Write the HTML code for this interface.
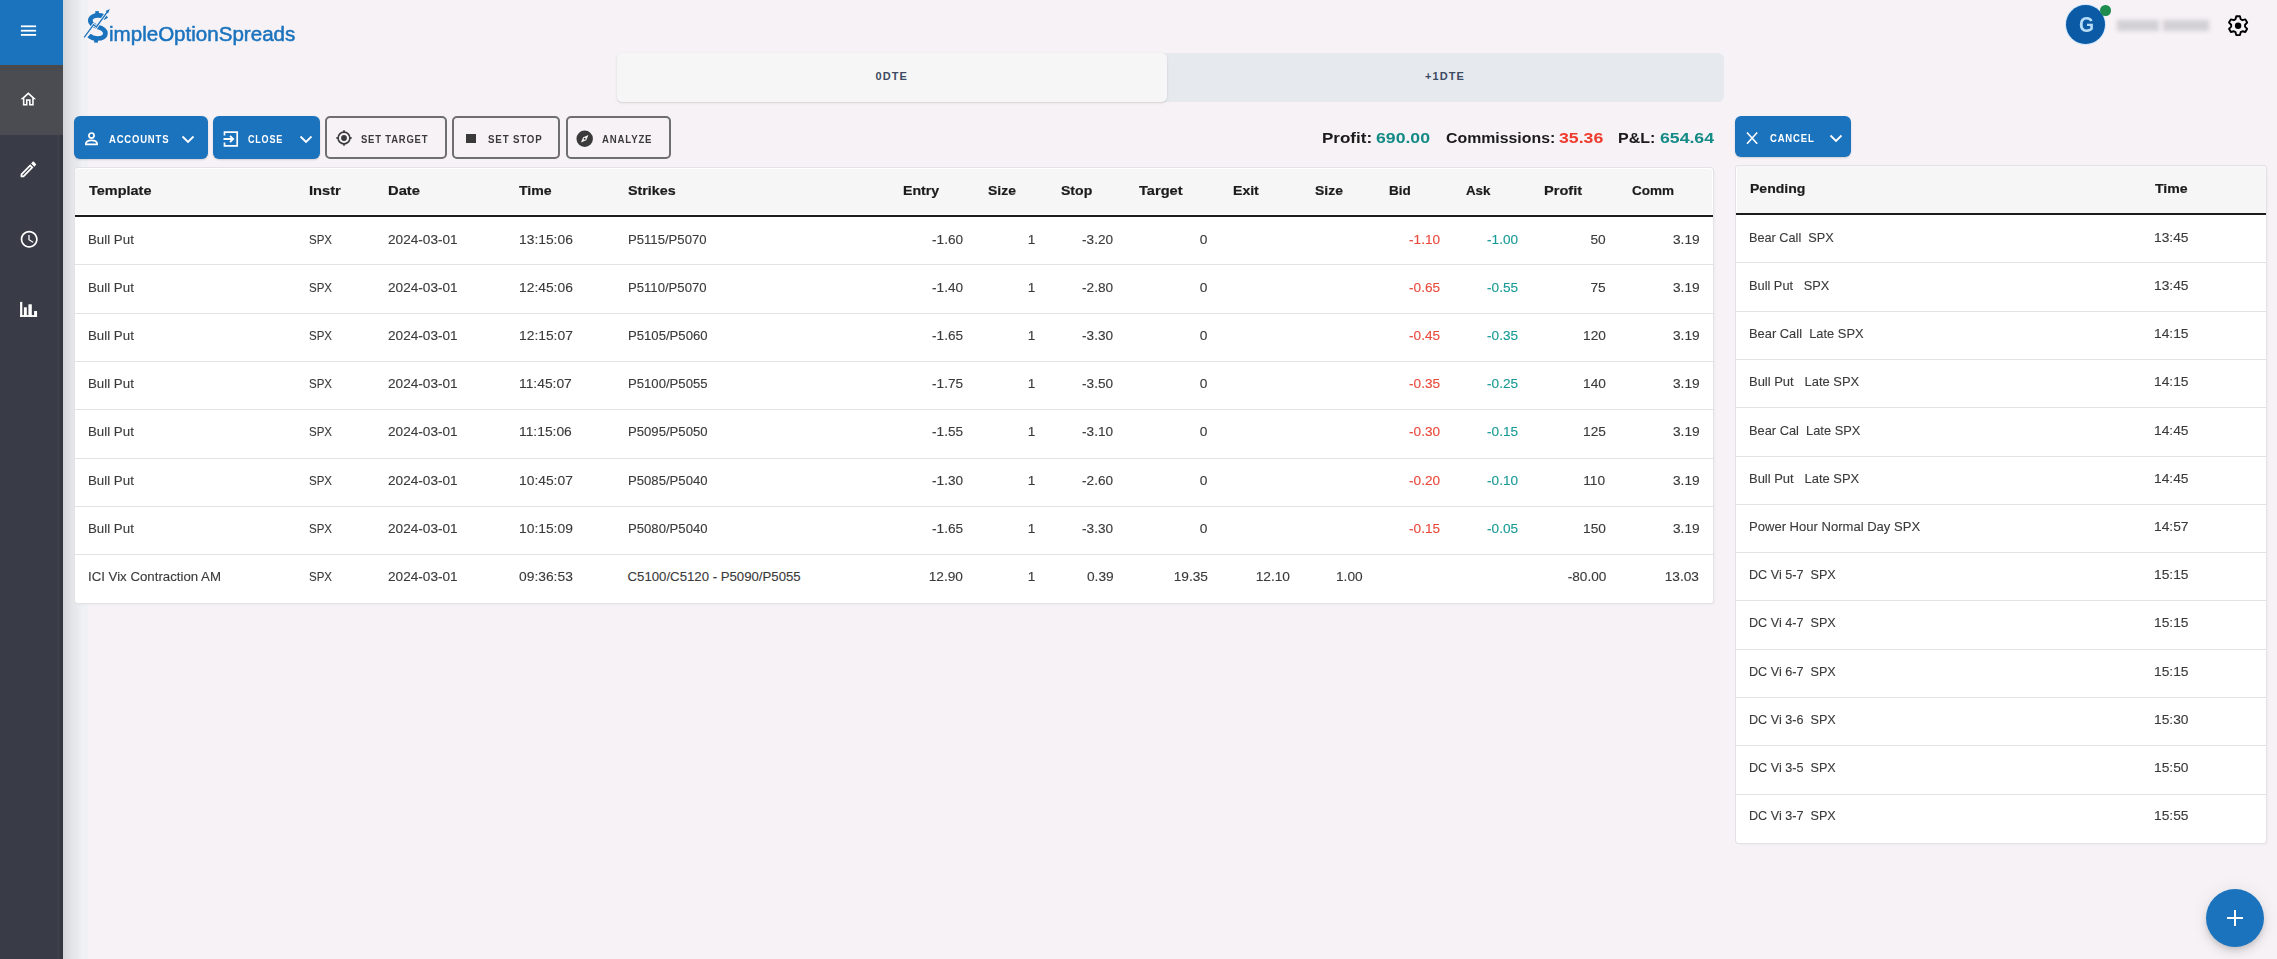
<!DOCTYPE html>
<html><head><meta charset="utf-8"><title>SimpleOptionSpreads</title>
<style>
html,body{margin:0;padding:0;}
body{width:2277px;height:959px;background:#f6f2f5;position:relative;overflow:hidden;font-family:"Liberation Sans",sans-serif;}
.t{position:absolute;white-space:pre;}
</style></head><body>
<div style="position:absolute;left:0px;top:0px;width:63px;height:959px;background:#393c46;z-index:2"></div>
<div style="position:absolute;left:57px;top:0px;width:3px;height:959px;background:#3c3f48;z-index:2"></div>
<div style="position:absolute;left:60px;top:0px;width:3px;height:959px;background:#343741;z-index:2"></div>
<div style="position:absolute;left:63px;top:0px;width:25px;height:959px;background:linear-gradient(to right,#d3d5d8 0px,#dcdde0 5px,#e5e5e9 9px,#e9eaee 15px,#eff1f5 19px,#f0f1f5 24px,#f3f2f5 25px)"></div>
<div style="position:absolute;left:0px;top:0px;width:63px;height:65px;background:#1b73be;z-index:3"></div>
<div style="position:absolute;left:0px;top:65px;width:63px;height:6px;background:linear-gradient(to bottom,#4e4949 0,#4e4949 1.8px,#3f4a58 1.8px,#3f4a58 3px,#4e4949 3px,#4e4949 4.8px,#414c58 4.8px,#414c58 6px);z-index:3"></div>
<div style="position:absolute;left:0px;top:71px;width:63px;height:64px;background:#4a4c51;z-index:3"></div>
<svg style="position:absolute;left:0;top:0;z-index:4" width="63" height="65" viewBox="0 0 63 65"><g fill="#fff"><rect x="20.9" y="25.4" width="15.2" height="1.8"/><rect x="20.9" y="29.8" width="15.2" height="1.8"/><rect x="20.9" y="34.0" width="15.2" height="1.8"/></g></svg>
<svg style="position:absolute;left:19.3px;top:90.1px;z-index:4" width="18.6" height="18.6" viewBox="0 0 24 24"><path fill="#fff" d="M12 5.69l5 4.5V18h-2v-6H9v6H7v-7.81l5-4.5M12 3L2 12h3v8h6v-6h2v6h6v-8h3L12 3z"/></svg>
<svg style="position:absolute;left:18.3px;top:158.5px;z-index:4" width="20.8" height="20.8" viewBox="0 0 24 24"><path fill="#fff" d="M14.06 9.02l.92.92L5.92 19H5v-.92l9.06-9.06M17.66 3c-.25 0-.51.1-.7.29l-1.83 1.83 3.75 3.75 1.83-1.83c.39-.39.39-1.02 0-1.41l-2.34-2.34c-.2-.2-.45-.29-.71-.29zm-3.6 3.19L3 17.25V21h3.75L17.81 9.94l-3.75-3.75z"/></svg>
<svg style="position:absolute;left:18.6px;top:229.0px;z-index:4" width="20.4" height="20.4" viewBox="0 0 24 24"><path fill="#fff" d="M11.99 2C6.47 2 2 6.48 2 12s4.47 10 9.99 10C17.52 22 22 17.52 22 12S17.52 2 11.99 2zM12 20c-4.42 0-8-3.58-8-8s3.58-8 8-8 8 3.58 8 8-3.58 8-8 8zm.5-13H11v6l5.25 3.15.75-1.23-4.5-2.67z"/></svg>
<svg style="position:absolute;left:0;top:290px;z-index:4" width="63" height="40" viewBox="0 290 63 40"><g fill="#fff"><rect x="20.1" y="301.9" width="2.2" height="15"/><rect x="23.9" y="307.3" width="2.9" height="9.6"/><rect x="28.4" y="304.3" width="3.4" height="12.6"/><rect x="34.1" y="311" width="2.95" height="5.9"/><rect x="20.1" y="315.1" width="16.95" height="1.8"/></g></svg>
<svg style="position:absolute;left:82px;top:6px" width="32" height="40" viewBox="0 0 32 40">
<path d="M24 12.8 C22.5 10.2 19 9.3 16 9.4 C11.5 9.5 8.3 11.8 8.3 14.8 C8.3 18.2 12 19.8 16 21 C20.5 22.3 23.4 24 23.4 27.3 C23.4 30.8 19.8 32.5 15.5 32.5 C11.8 32.5 9 31.5 7 29.5" fill="none" stroke="#1b73be" stroke-width="4.7"/>
<rect x="13.3" y="5.1" width="3.6" height="3.6" fill="#1b73be"/>
<rect x="12.2" y="32.5" width="3.8" height="4.1" fill="#1b73be"/>
<path d="M2.2 31.4 L11.6 18.7 L14.4 21 L25.5 5.6" fill="none" stroke="#f6f2f5" stroke-width="3.0"/>
<path d="M2.2 31.4 L11.6 18.7 L14.4 21 L25.5 5.6" fill="none" stroke="#1b73be" stroke-width="1.3"/>
<path d="M27.8 3.0 L23.6 5.0 L26.0 7.4 Z" fill="#1b73be"/>
</svg>
<div class="t" style="left:108.50px;top:23.77px;font-size:20px;line-height:20px;font-weight:normal;color:#1b73be;transform:scaleX(1.0280);transform-origin:left 0;-webkit-text-stroke:0.5px #1b73be;">impleOptionSpreads</div>
<div style="position:absolute;left:2066px;top:5px;width:39px;height:39px;background:#0b5aa6;border-radius:50%;box-shadow:0 0 0 1px #cfe6fb"></div>
<div class="t" style="left:2078.60px;top:14.05px;font-size:22.5px;line-height:22.5px;font-weight:bold;color:#b7dcf6;transform:scaleX(0.8600);transform-origin:left 0;">G</div>
<div style="position:absolute;left:2100px;top:5px;width:10.5px;height:10.5px;background:#1f8c4f;border-radius:50%"></div>
<div style="position:absolute;left:2117px;top:19.5px;width:42px;height:11px;background:#d2d0d4;filter:blur(2px)"></div>
<div style="position:absolute;left:2163px;top:19.5px;width:46px;height:11px;background:#d2d0d4;filter:blur(2px)"></div>
<svg style="position:absolute;left:2222px;top:10px" width="32" height="32" viewBox="2222 10 32 32"><path fill="none" stroke="#000" stroke-width="1.9" stroke-linejoin="round" d="M2235.48 19.21 L2236.27 16.28 L2239.93 16.28 L2240.72 19.21 L2242.41 20.18 L2245.35 19.40 L2247.18 22.57 L2245.03 24.73 L2245.03 26.67 L2247.18 28.83 L2245.35 32.00 L2242.41 31.22 L2240.72 32.19 L2239.93 35.12 L2236.27 35.12 L2235.48 32.19 L2233.79 31.22 L2230.85 32.00 L2229.02 28.83 L2231.17 26.67 L2231.17 24.73 L2229.02 22.57 L2230.85 19.40 L2233.79 20.18Z"/><circle cx="2238.1" cy="25.7" r="3.2" fill="#000"/></svg>
<div style="position:absolute;left:617px;top:53px;width:1107px;height:49px;background:#e6e9ee;border-radius:6px"></div>
<div style="position:absolute;left:617px;top:53px;width:550px;height:49px;background:#f6f6f6;border-radius:5px;box-shadow:0 1px 3px rgba(0,0,0,0.10), 0 1px 1px rgba(0,0,0,0.05)"></div>
<div class="t" style="left:875.50px;top:71.49px;font-size:11px;line-height:11px;font-weight:bold;color:#3c4a63;letter-spacing:1.1px;">0DTE</div>
<div class="t" style="left:1425.00px;top:71.49px;font-size:11px;line-height:11px;font-weight:bold;color:#3c4a63;letter-spacing:1.1px;">+1DTE</div>
<div style="position:absolute;left:73.5px;top:116.3px;width:134.2px;height:43px;background:#1b73be;border-radius:6px;box-shadow:0 1px 2px rgba(0,0,0,0.15)"></div>
<div style="position:absolute;left:213px;top:116.3px;width:107px;height:43px;background:#1b73be;border-radius:6px;box-shadow:0 1px 2px rgba(0,0,0,0.15)"></div>
<div style="position:absolute;left:325px;top:116px;width:122px;height:43px;border:2px solid #6f6f6f;border-radius:5px;box-sizing:border-box"></div>
<div style="position:absolute;left:452px;top:116px;width:108px;height:43px;border:2px solid #6f6f6f;border-radius:5px;box-sizing:border-box"></div>
<div style="position:absolute;left:566px;top:116px;width:105px;height:43px;border:2px solid #6f6f6f;border-radius:5px;box-sizing:border-box"></div>
<div style="position:absolute;left:1735.2px;top:116.3px;width:115.5px;height:40.4px;background:#1b73be;border-radius:6px;box-shadow:0 1px 2px rgba(0,0,0,0.15)"></div>
<svg style="position:absolute;left:84px;top:131px" width="16" height="16" viewBox="0 0 16 16"><circle cx="7.5" cy="4.6" r="2.6" fill="none" stroke="#fff" stroke-width="1.7"/><path d="M1.8 13.4 C1.8 10.4 4.4 9.3 7.5 9.3 C10.6 9.3 13.2 10.4 13.2 13.4 Z" fill="none" stroke="#fff" stroke-width="1.7" stroke-linejoin="round"/></svg>
<svg style="position:absolute;left:180px;top:131px" width="16" height="16" viewBox="0 0 16 16"><path d="M2.5 5.5 L8 11 L13.5 5.5" fill="none" stroke="#fff" stroke-width="1.8"/></svg>
<svg style="position:absolute;left:222px;top:130px" width="18" height="18" viewBox="0 0 18 18"><path d="M2.5 5.5 V2.2 H15.2 V15.8 H2.5 V12.5" fill="none" stroke="#fff" stroke-width="1.7"/><path d="M1.5 9 H11 M8 5.8 L11.2 9 L8 12.2" fill="none" stroke="#fff" stroke-width="1.8"/></svg>
<svg style="position:absolute;left:297.5px;top:131px" width="16" height="16" viewBox="0 0 16 16"><path d="M2.5 5.5 L8 11 L13.5 5.5" fill="none" stroke="#fff" stroke-width="1.8"/></svg>
<svg style="position:absolute;left:334.7px;top:129.3px" width="18" height="18" viewBox="0 0 18 18"><circle cx="9" cy="9" r="5.9" fill="none" stroke="#3a3a3a" stroke-width="1.6"/><circle cx="9" cy="9" r="2.9" fill="#3a3a3a"/><path d="M9 1.2V3.4M9 14.6V16.8M1.2 9H3.4M14.6 9H16.8" stroke="#3a3a3a" stroke-width="1.6"/></svg>
<div style="position:absolute;left:466.2px;top:134.3px;width:9.8px;height:9.2px;background:#3a3a3a"></div>
<svg style="position:absolute;left:576px;top:129.7px" width="17.4" height="17.4" viewBox="0 0 18 18"><circle cx="9" cy="9" r="8.5" fill="#3a3a3a"/><path d="M12.9 5.1 L10.6 10.6 L5.1 12.9 L7.4 7.4 Z" fill="#f6f2f5"/><circle cx="9" cy="9" r="1" fill="#3a3a3a"/></svg>
<svg style="position:absolute;left:1745px;top:130.5px" width="14" height="14" viewBox="0 0 14 14"><path d="M2 1.5 L12.2 12.7 M12.2 1.5 L2 12.7" stroke="#fff" stroke-width="1.6"/></svg>
<svg style="position:absolute;left:1828px;top:130px" width="16" height="16" viewBox="0 0 16 16"><path d="M2.5 5.5 L8 11 L13.5 5.5" fill="none" stroke="#fff" stroke-width="1.8"/></svg>
<div class="t" style="left:108.50px;top:134.11px;font-size:10.5px;line-height:10.5px;font-weight:bold;color:#fff;letter-spacing:0.9px;transform:scaleX(0.9040);transform-origin:left 0;">ACCOUNTS</div>
<div class="t" style="left:247.50px;top:134.11px;font-size:10.5px;line-height:10.5px;font-weight:bold;color:#fff;letter-spacing:0.9px;transform:scaleX(0.8610);transform-origin:left 0;">CLOSE</div>
<div class="t" style="left:360.70px;top:134.01px;font-size:10.5px;line-height:10.5px;font-weight:bold;color:#3b3b3b;letter-spacing:0.9px;transform:scaleX(0.9010);transform-origin:left 0;">SET TARGET</div>
<div class="t" style="left:488.10px;top:134.01px;font-size:10.5px;line-height:10.5px;font-weight:bold;color:#3b3b3b;letter-spacing:0.9px;transform:scaleX(0.9260);transform-origin:left 0;">SET STOP</div>
<div class="t" style="left:601.70px;top:134.01px;font-size:10.5px;line-height:10.5px;font-weight:bold;color:#3b3b3b;letter-spacing:0.9px;transform:scaleX(0.9170);transform-origin:left 0;">ANALYZE</div>
<div class="t" style="left:1769.70px;top:132.91px;font-size:10.5px;line-height:10.5px;font-weight:bold;color:#fff;letter-spacing:0.9px;transform:scaleX(0.9060);transform-origin:left 0;">CANCEL</div>
<div class="t" style="left:1321.50px;top:130.74px;font-size:14.84px;line-height:14.84px;font-weight:bold;color:#1b1b1b;transform:scaleX(1.1470);transform-origin:left 0;">Profit: </div>
<div class="t" style="left:1376.34px;top:130.74px;font-size:14.84px;line-height:14.84px;font-weight:bold;color:#138a86;transform:scaleX(1.1902);transform-origin:left 0;">690.00</div>
<div class="t" style="left:1445.50px;top:130.74px;font-size:14.84px;line-height:14.84px;font-weight:bold;color:#1b1b1b;transform:scaleX(1.0691);transform-origin:left 0;">Commissions: </div>
<div class="t" style="left:1559.22px;top:130.74px;font-size:14.84px;line-height:14.84px;font-weight:bold;color:#ee3a2c;transform:scaleX(1.1925);transform-origin:left 0;">35.36</div>
<div class="t" style="left:1618.20px;top:130.74px;font-size:14.84px;line-height:14.84px;font-weight:bold;color:#1b1b1b;transform:scaleX(1.0805);transform-origin:left 0;">P&amp;L: </div>
<div class="t" style="left:1660.06px;top:130.74px;font-size:14.84px;line-height:14.84px;font-weight:bold;color:#138a86;transform:scaleX(1.1902);transform-origin:left 0;">654.64</div>
<div style="position:absolute;left:74.5px;top:168px;width:1638.5px;height:435.4px;background:#fff;border-radius:3px;box-shadow:0 0 0 1px #e3e2e6,2px 2px 2px rgba(0,0,0,0.03)"></div>
<div style="position:absolute;left:75.3px;top:168.8px;width:1636.9px;height:45.6px;background:#f6f6f6;border-radius:3px 3px 0 0"></div>
<div style="position:absolute;left:74.5px;top:215px;width:1638.5px;height:2px;background:#1c1c1e"></div>
<div style="position:absolute;left:74.5px;top:264.3px;width:1638.5px;height:1px;background:#e3e3e6"></div>
<div style="position:absolute;left:74.5px;top:312.6px;width:1638.5px;height:1px;background:#e3e3e6"></div>
<div style="position:absolute;left:74.5px;top:360.9px;width:1638.5px;height:1px;background:#e3e3e6"></div>
<div style="position:absolute;left:74.5px;top:409.2px;width:1638.5px;height:1px;background:#e3e3e6"></div>
<div style="position:absolute;left:74.5px;top:457.5px;width:1638.5px;height:1px;background:#e3e3e6"></div>
<div style="position:absolute;left:74.5px;top:505.8px;width:1638.5px;height:1px;background:#e3e3e6"></div>
<div style="position:absolute;left:74.5px;top:554.1px;width:1638.5px;height:1px;background:#e3e3e6"></div>
<div class="t" style="left:88.50px;top:184.20px;font-size:13.0px;line-height:13.0px;font-weight:bold;color:#1c1c1c;transform:scaleX(1.1127);transform-origin:left 0;-webkit-text-stroke:0.2px #1c1c1c;">Template</div>
<div class="t" style="left:309.00px;top:184.20px;font-size:13.0px;line-height:13.0px;font-weight:bold;color:#1c1c1c;transform:scaleX(1.1290);transform-origin:left 0;-webkit-text-stroke:0.2px #1c1c1c;">Instr</div>
<div class="t" style="left:387.70px;top:184.20px;font-size:13.0px;line-height:13.0px;font-weight:bold;color:#1c1c1c;transform:scaleX(1.1333);transform-origin:left 0;-webkit-text-stroke:0.2px #1c1c1c;">Date</div>
<div class="t" style="left:519.00px;top:184.20px;font-size:13.0px;line-height:13.0px;font-weight:bold;color:#1c1c1c;transform:scaleX(1.0857);transform-origin:left 0;-webkit-text-stroke:0.2px #1c1c1c;">Time</div>
<div class="t" style="left:628.00px;top:184.20px;font-size:13.0px;line-height:13.0px;font-weight:bold;color:#1c1c1c;transform:scaleX(1.0994);transform-origin:left 0;-webkit-text-stroke:0.2px #1c1c1c;">Strikes</div>
<div class="t" style="left:903.00px;top:184.20px;font-size:13.0px;line-height:13.0px;font-weight:bold;color:#1c1c1c;transform:scaleX(1.0899);transform-origin:left 0;-webkit-text-stroke:0.2px #1c1c1c;">Entry</div>
<div class="t" style="left:987.70px;top:184.20px;font-size:13.0px;line-height:13.0px;font-weight:bold;color:#1c1c1c;transform:scaleX(1.0717);transform-origin:left 0;-webkit-text-stroke:0.2px #1c1c1c;">Size</div>
<div class="t" style="left:1061.00px;top:184.20px;font-size:13.0px;line-height:13.0px;font-weight:bold;color:#1c1c1c;transform:scaleX(1.0807);transform-origin:left 0;-webkit-text-stroke:0.2px #1c1c1c;">Stop</div>
<div class="t" style="left:1139.00px;top:184.20px;font-size:13.0px;line-height:13.0px;font-weight:bold;color:#1c1c1c;transform:scaleX(1.1242);transform-origin:left 0;-webkit-text-stroke:0.2px #1c1c1c;">Target</div>
<div class="t" style="left:1233.00px;top:184.20px;font-size:13.0px;line-height:13.0px;font-weight:bold;color:#1c1c1c;transform:scaleX(1.0816);transform-origin:left 0;-webkit-text-stroke:0.2px #1c1c1c;">Exit</div>
<div class="t" style="left:1315.00px;top:184.20px;font-size:13.0px;line-height:13.0px;font-weight:bold;color:#1c1c1c;transform:scaleX(1.0717);transform-origin:left 0;-webkit-text-stroke:0.2px #1c1c1c;">Size</div>
<div class="t" style="left:1388.50px;top:184.20px;font-size:13.0px;line-height:13.0px;font-weight:bold;color:#1c1c1c;transform:scaleX(1.0434);transform-origin:left 0;-webkit-text-stroke:0.2px #1c1c1c;">Bid</div>
<div class="t" style="left:1466.00px;top:184.20px;font-size:13.0px;line-height:13.0px;font-weight:bold;color:#1c1c1c;transform:scaleX(1.0236);transform-origin:left 0;-webkit-text-stroke:0.2px #1c1c1c;">Ask</div>
<div class="t" style="left:1543.70px;top:184.20px;font-size:13.0px;line-height:13.0px;font-weight:bold;color:#1c1c1c;transform:scaleX(1.1204);transform-origin:left 0;-webkit-text-stroke:0.2px #1c1c1c;">Profit</div>
<div class="t" style="left:1631.50px;top:184.20px;font-size:13.0px;line-height:13.0px;font-weight:bold;color:#1c1c1c;transform:scaleX(1.0398);transform-origin:left 0;-webkit-text-stroke:0.2px #1c1c1c;">Comm</div>
<div class="t" style="left:87.60px;top:232.63px;font-size:13.2px;line-height:13.2px;font-weight:normal;color:#3a3a3a;transform:scaleX(1.0083);transform-origin:left 0;-webkit-text-stroke:0.12px currentColor;">Bull Put</div>
<div class="t" style="left:308.50px;top:232.63px;font-size:13.2px;line-height:13.2px;font-weight:normal;color:#3a3a3a;transform:scaleX(0.8736);transform-origin:left 0;-webkit-text-stroke:0.12px currentColor;">SPX</div>
<div class="t" style="left:387.50px;top:232.63px;font-size:13.2px;line-height:13.2px;font-weight:normal;color:#3a3a3a;transform:scaleX(1.0328);transform-origin:left 0;-webkit-text-stroke:0.12px currentColor;">2024-03-01</div>
<div class="t" style="left:518.60px;top:232.63px;font-size:13.2px;line-height:13.2px;font-weight:normal;color:#3a3a3a;transform:scaleX(1.0489);transform-origin:left 0;-webkit-text-stroke:0.12px currentColor;">13:15:06</div>
<div class="t" style="left:627.60px;top:232.63px;font-size:13.2px;line-height:13.2px;font-weight:normal;color:#3a3a3a;transform:scaleX(0.9949);transform-origin:left 0;-webkit-text-stroke:0.12px currentColor;">P5115/P5070</div>
<div class="t" style="left:932.71px;top:232.63px;font-size:13.2px;line-height:13.2px;font-weight:normal;color:#3a3a3a;transform:scaleX(1.0320);transform-origin:right 0;-webkit-text-stroke:0.12px currentColor;">-1.60</div>
<div class="t" style="left:1028.46px;top:232.63px;font-size:13.2px;line-height:13.2px;font-weight:normal;color:#3a3a3a;transform:scaleX(1.0400);transform-origin:right 0;-webkit-text-stroke:0.12px currentColor;">1</div>
<div class="t" style="left:1083.41px;top:232.63px;font-size:13.2px;line-height:13.2px;font-weight:normal;color:#3a3a3a;transform:scaleX(1.0320);transform-origin:right 0;-webkit-text-stroke:0.12px currentColor;">-3.20</div>
<div class="t" style="left:1200.46px;top:232.63px;font-size:13.2px;line-height:13.2px;font-weight:normal;color:#3a3a3a;transform:scaleX(1.0400);transform-origin:right 0;-webkit-text-stroke:0.12px currentColor;">0</div>
<div class="t" style="left:1410.41px;top:232.63px;font-size:13.2px;line-height:13.2px;font-weight:normal;color:#e84a3c;transform:scaleX(1.0320);transform-origin:right 0;-webkit-text-stroke:0.12px currentColor;">-1.10</div>
<div class="t" style="left:1487.91px;top:232.63px;font-size:13.2px;line-height:13.2px;font-weight:normal;color:#1a9a96;transform:scaleX(1.0320);transform-origin:right 0;-webkit-text-stroke:0.12px currentColor;">-1.00</div>
<div class="t" style="left:1591.32px;top:232.63px;font-size:13.2px;line-height:13.2px;font-weight:normal;color:#3a3a3a;transform:scaleX(1.0400);transform-origin:right 0;-webkit-text-stroke:0.12px currentColor;">50</div>
<div class="t" style="left:1673.51px;top:232.63px;font-size:13.2px;line-height:13.2px;font-weight:normal;color:#3a3a3a;transform:scaleX(1.0400);transform-origin:right 0;-webkit-text-stroke:0.12px currentColor;">3.19</div>
<div class="t" style="left:87.60px;top:280.83px;font-size:13.2px;line-height:13.2px;font-weight:normal;color:#3a3a3a;transform:scaleX(1.0083);transform-origin:left 0;-webkit-text-stroke:0.12px currentColor;">Bull Put</div>
<div class="t" style="left:308.50px;top:280.83px;font-size:13.2px;line-height:13.2px;font-weight:normal;color:#3a3a3a;transform:scaleX(0.8736);transform-origin:left 0;-webkit-text-stroke:0.12px currentColor;">SPX</div>
<div class="t" style="left:387.50px;top:280.83px;font-size:13.2px;line-height:13.2px;font-weight:normal;color:#3a3a3a;transform:scaleX(1.0328);transform-origin:left 0;-webkit-text-stroke:0.12px currentColor;">2024-03-01</div>
<div class="t" style="left:518.60px;top:280.83px;font-size:13.2px;line-height:13.2px;font-weight:normal;color:#3a3a3a;transform:scaleX(1.0489);transform-origin:left 0;-webkit-text-stroke:0.12px currentColor;">12:45:06</div>
<div class="t" style="left:627.60px;top:280.83px;font-size:13.2px;line-height:13.2px;font-weight:normal;color:#3a3a3a;transform:scaleX(0.9949);transform-origin:left 0;-webkit-text-stroke:0.12px currentColor;">P5110/P5070</div>
<div class="t" style="left:932.71px;top:280.83px;font-size:13.2px;line-height:13.2px;font-weight:normal;color:#3a3a3a;transform:scaleX(1.0320);transform-origin:right 0;-webkit-text-stroke:0.12px currentColor;">-1.40</div>
<div class="t" style="left:1028.46px;top:280.83px;font-size:13.2px;line-height:13.2px;font-weight:normal;color:#3a3a3a;transform:scaleX(1.0400);transform-origin:right 0;-webkit-text-stroke:0.12px currentColor;">1</div>
<div class="t" style="left:1083.41px;top:280.83px;font-size:13.2px;line-height:13.2px;font-weight:normal;color:#3a3a3a;transform:scaleX(1.0320);transform-origin:right 0;-webkit-text-stroke:0.12px currentColor;">-2.80</div>
<div class="t" style="left:1200.46px;top:280.83px;font-size:13.2px;line-height:13.2px;font-weight:normal;color:#3a3a3a;transform:scaleX(1.0400);transform-origin:right 0;-webkit-text-stroke:0.12px currentColor;">0</div>
<div class="t" style="left:1410.41px;top:280.83px;font-size:13.2px;line-height:13.2px;font-weight:normal;color:#e84a3c;transform:scaleX(1.0320);transform-origin:right 0;-webkit-text-stroke:0.12px currentColor;">-0.65</div>
<div class="t" style="left:1487.91px;top:280.83px;font-size:13.2px;line-height:13.2px;font-weight:normal;color:#1a9a96;transform:scaleX(1.0320);transform-origin:right 0;-webkit-text-stroke:0.12px currentColor;">-0.55</div>
<div class="t" style="left:1591.32px;top:280.83px;font-size:13.2px;line-height:13.2px;font-weight:normal;color:#3a3a3a;transform:scaleX(1.0400);transform-origin:right 0;-webkit-text-stroke:0.12px currentColor;">75</div>
<div class="t" style="left:1673.51px;top:280.83px;font-size:13.2px;line-height:13.2px;font-weight:normal;color:#3a3a3a;transform:scaleX(1.0400);transform-origin:right 0;-webkit-text-stroke:0.12px currentColor;">3.19</div>
<div class="t" style="left:87.60px;top:329.03px;font-size:13.2px;line-height:13.2px;font-weight:normal;color:#3a3a3a;transform:scaleX(1.0083);transform-origin:left 0;-webkit-text-stroke:0.12px currentColor;">Bull Put</div>
<div class="t" style="left:308.50px;top:329.03px;font-size:13.2px;line-height:13.2px;font-weight:normal;color:#3a3a3a;transform:scaleX(0.8736);transform-origin:left 0;-webkit-text-stroke:0.12px currentColor;">SPX</div>
<div class="t" style="left:387.50px;top:329.03px;font-size:13.2px;line-height:13.2px;font-weight:normal;color:#3a3a3a;transform:scaleX(1.0328);transform-origin:left 0;-webkit-text-stroke:0.12px currentColor;">2024-03-01</div>
<div class="t" style="left:518.60px;top:329.03px;font-size:13.2px;line-height:13.2px;font-weight:normal;color:#3a3a3a;transform:scaleX(1.0489);transform-origin:left 0;-webkit-text-stroke:0.12px currentColor;">12:15:07</div>
<div class="t" style="left:627.60px;top:329.03px;font-size:13.2px;line-height:13.2px;font-weight:normal;color:#3a3a3a;transform:scaleX(0.9949);transform-origin:left 0;-webkit-text-stroke:0.12px currentColor;">P5105/P5060</div>
<div class="t" style="left:932.71px;top:329.03px;font-size:13.2px;line-height:13.2px;font-weight:normal;color:#3a3a3a;transform:scaleX(1.0320);transform-origin:right 0;-webkit-text-stroke:0.12px currentColor;">-1.65</div>
<div class="t" style="left:1028.46px;top:329.03px;font-size:13.2px;line-height:13.2px;font-weight:normal;color:#3a3a3a;transform:scaleX(1.0400);transform-origin:right 0;-webkit-text-stroke:0.12px currentColor;">1</div>
<div class="t" style="left:1083.41px;top:329.03px;font-size:13.2px;line-height:13.2px;font-weight:normal;color:#3a3a3a;transform:scaleX(1.0320);transform-origin:right 0;-webkit-text-stroke:0.12px currentColor;">-3.30</div>
<div class="t" style="left:1200.46px;top:329.03px;font-size:13.2px;line-height:13.2px;font-weight:normal;color:#3a3a3a;transform:scaleX(1.0400);transform-origin:right 0;-webkit-text-stroke:0.12px currentColor;">0</div>
<div class="t" style="left:1410.41px;top:329.03px;font-size:13.2px;line-height:13.2px;font-weight:normal;color:#e84a3c;transform:scaleX(1.0320);transform-origin:right 0;-webkit-text-stroke:0.12px currentColor;">-0.45</div>
<div class="t" style="left:1487.91px;top:329.03px;font-size:13.2px;line-height:13.2px;font-weight:normal;color:#1a9a96;transform:scaleX(1.0320);transform-origin:right 0;-webkit-text-stroke:0.12px currentColor;">-0.35</div>
<div class="t" style="left:1583.98px;top:329.03px;font-size:13.2px;line-height:13.2px;font-weight:normal;color:#3a3a3a;transform:scaleX(1.0400);transform-origin:right 0;-webkit-text-stroke:0.12px currentColor;">120</div>
<div class="t" style="left:1673.51px;top:329.03px;font-size:13.2px;line-height:13.2px;font-weight:normal;color:#3a3a3a;transform:scaleX(1.0400);transform-origin:right 0;-webkit-text-stroke:0.12px currentColor;">3.19</div>
<div class="t" style="left:87.60px;top:377.23px;font-size:13.2px;line-height:13.2px;font-weight:normal;color:#3a3a3a;transform:scaleX(1.0083);transform-origin:left 0;-webkit-text-stroke:0.12px currentColor;">Bull Put</div>
<div class="t" style="left:308.50px;top:377.23px;font-size:13.2px;line-height:13.2px;font-weight:normal;color:#3a3a3a;transform:scaleX(0.8736);transform-origin:left 0;-webkit-text-stroke:0.12px currentColor;">SPX</div>
<div class="t" style="left:387.50px;top:377.23px;font-size:13.2px;line-height:13.2px;font-weight:normal;color:#3a3a3a;transform:scaleX(1.0328);transform-origin:left 0;-webkit-text-stroke:0.12px currentColor;">2024-03-01</div>
<div class="t" style="left:518.60px;top:377.23px;font-size:13.2px;line-height:13.2px;font-weight:normal;color:#3a3a3a;transform:scaleX(1.0489);transform-origin:left 0;-webkit-text-stroke:0.12px currentColor;">11:45:07</div>
<div class="t" style="left:627.60px;top:377.23px;font-size:13.2px;line-height:13.2px;font-weight:normal;color:#3a3a3a;transform:scaleX(0.9949);transform-origin:left 0;-webkit-text-stroke:0.12px currentColor;">P5100/P5055</div>
<div class="t" style="left:932.71px;top:377.23px;font-size:13.2px;line-height:13.2px;font-weight:normal;color:#3a3a3a;transform:scaleX(1.0320);transform-origin:right 0;-webkit-text-stroke:0.12px currentColor;">-1.75</div>
<div class="t" style="left:1028.46px;top:377.23px;font-size:13.2px;line-height:13.2px;font-weight:normal;color:#3a3a3a;transform:scaleX(1.0400);transform-origin:right 0;-webkit-text-stroke:0.12px currentColor;">1</div>
<div class="t" style="left:1083.41px;top:377.23px;font-size:13.2px;line-height:13.2px;font-weight:normal;color:#3a3a3a;transform:scaleX(1.0320);transform-origin:right 0;-webkit-text-stroke:0.12px currentColor;">-3.50</div>
<div class="t" style="left:1200.46px;top:377.23px;font-size:13.2px;line-height:13.2px;font-weight:normal;color:#3a3a3a;transform:scaleX(1.0400);transform-origin:right 0;-webkit-text-stroke:0.12px currentColor;">0</div>
<div class="t" style="left:1410.41px;top:377.23px;font-size:13.2px;line-height:13.2px;font-weight:normal;color:#e84a3c;transform:scaleX(1.0320);transform-origin:right 0;-webkit-text-stroke:0.12px currentColor;">-0.35</div>
<div class="t" style="left:1487.91px;top:377.23px;font-size:13.2px;line-height:13.2px;font-weight:normal;color:#1a9a96;transform:scaleX(1.0320);transform-origin:right 0;-webkit-text-stroke:0.12px currentColor;">-0.25</div>
<div class="t" style="left:1583.98px;top:377.23px;font-size:13.2px;line-height:13.2px;font-weight:normal;color:#3a3a3a;transform:scaleX(1.0400);transform-origin:right 0;-webkit-text-stroke:0.12px currentColor;">140</div>
<div class="t" style="left:1673.51px;top:377.23px;font-size:13.2px;line-height:13.2px;font-weight:normal;color:#3a3a3a;transform:scaleX(1.0400);transform-origin:right 0;-webkit-text-stroke:0.12px currentColor;">3.19</div>
<div class="t" style="left:87.60px;top:425.43px;font-size:13.2px;line-height:13.2px;font-weight:normal;color:#3a3a3a;transform:scaleX(1.0083);transform-origin:left 0;-webkit-text-stroke:0.12px currentColor;">Bull Put</div>
<div class="t" style="left:308.50px;top:425.43px;font-size:13.2px;line-height:13.2px;font-weight:normal;color:#3a3a3a;transform:scaleX(0.8736);transform-origin:left 0;-webkit-text-stroke:0.12px currentColor;">SPX</div>
<div class="t" style="left:387.50px;top:425.43px;font-size:13.2px;line-height:13.2px;font-weight:normal;color:#3a3a3a;transform:scaleX(1.0328);transform-origin:left 0;-webkit-text-stroke:0.12px currentColor;">2024-03-01</div>
<div class="t" style="left:518.60px;top:425.43px;font-size:13.2px;line-height:13.2px;font-weight:normal;color:#3a3a3a;transform:scaleX(1.0489);transform-origin:left 0;-webkit-text-stroke:0.12px currentColor;">11:15:06</div>
<div class="t" style="left:627.60px;top:425.43px;font-size:13.2px;line-height:13.2px;font-weight:normal;color:#3a3a3a;transform:scaleX(0.9949);transform-origin:left 0;-webkit-text-stroke:0.12px currentColor;">P5095/P5050</div>
<div class="t" style="left:932.71px;top:425.43px;font-size:13.2px;line-height:13.2px;font-weight:normal;color:#3a3a3a;transform:scaleX(1.0320);transform-origin:right 0;-webkit-text-stroke:0.12px currentColor;">-1.55</div>
<div class="t" style="left:1028.46px;top:425.43px;font-size:13.2px;line-height:13.2px;font-weight:normal;color:#3a3a3a;transform:scaleX(1.0400);transform-origin:right 0;-webkit-text-stroke:0.12px currentColor;">1</div>
<div class="t" style="left:1083.41px;top:425.43px;font-size:13.2px;line-height:13.2px;font-weight:normal;color:#3a3a3a;transform:scaleX(1.0320);transform-origin:right 0;-webkit-text-stroke:0.12px currentColor;">-3.10</div>
<div class="t" style="left:1200.46px;top:425.43px;font-size:13.2px;line-height:13.2px;font-weight:normal;color:#3a3a3a;transform:scaleX(1.0400);transform-origin:right 0;-webkit-text-stroke:0.12px currentColor;">0</div>
<div class="t" style="left:1410.41px;top:425.43px;font-size:13.2px;line-height:13.2px;font-weight:normal;color:#e84a3c;transform:scaleX(1.0320);transform-origin:right 0;-webkit-text-stroke:0.12px currentColor;">-0.30</div>
<div class="t" style="left:1487.91px;top:425.43px;font-size:13.2px;line-height:13.2px;font-weight:normal;color:#1a9a96;transform:scaleX(1.0320);transform-origin:right 0;-webkit-text-stroke:0.12px currentColor;">-0.15</div>
<div class="t" style="left:1583.98px;top:425.43px;font-size:13.2px;line-height:13.2px;font-weight:normal;color:#3a3a3a;transform:scaleX(1.0400);transform-origin:right 0;-webkit-text-stroke:0.12px currentColor;">125</div>
<div class="t" style="left:1673.51px;top:425.43px;font-size:13.2px;line-height:13.2px;font-weight:normal;color:#3a3a3a;transform:scaleX(1.0400);transform-origin:right 0;-webkit-text-stroke:0.12px currentColor;">3.19</div>
<div class="t" style="left:87.60px;top:473.63px;font-size:13.2px;line-height:13.2px;font-weight:normal;color:#3a3a3a;transform:scaleX(1.0083);transform-origin:left 0;-webkit-text-stroke:0.12px currentColor;">Bull Put</div>
<div class="t" style="left:308.50px;top:473.63px;font-size:13.2px;line-height:13.2px;font-weight:normal;color:#3a3a3a;transform:scaleX(0.8736);transform-origin:left 0;-webkit-text-stroke:0.12px currentColor;">SPX</div>
<div class="t" style="left:387.50px;top:473.63px;font-size:13.2px;line-height:13.2px;font-weight:normal;color:#3a3a3a;transform:scaleX(1.0328);transform-origin:left 0;-webkit-text-stroke:0.12px currentColor;">2024-03-01</div>
<div class="t" style="left:518.60px;top:473.63px;font-size:13.2px;line-height:13.2px;font-weight:normal;color:#3a3a3a;transform:scaleX(1.0489);transform-origin:left 0;-webkit-text-stroke:0.12px currentColor;">10:45:07</div>
<div class="t" style="left:627.60px;top:473.63px;font-size:13.2px;line-height:13.2px;font-weight:normal;color:#3a3a3a;transform:scaleX(0.9949);transform-origin:left 0;-webkit-text-stroke:0.12px currentColor;">P5085/P5040</div>
<div class="t" style="left:932.71px;top:473.63px;font-size:13.2px;line-height:13.2px;font-weight:normal;color:#3a3a3a;transform:scaleX(1.0320);transform-origin:right 0;-webkit-text-stroke:0.12px currentColor;">-1.30</div>
<div class="t" style="left:1028.46px;top:473.63px;font-size:13.2px;line-height:13.2px;font-weight:normal;color:#3a3a3a;transform:scaleX(1.0400);transform-origin:right 0;-webkit-text-stroke:0.12px currentColor;">1</div>
<div class="t" style="left:1083.41px;top:473.63px;font-size:13.2px;line-height:13.2px;font-weight:normal;color:#3a3a3a;transform:scaleX(1.0320);transform-origin:right 0;-webkit-text-stroke:0.12px currentColor;">-2.60</div>
<div class="t" style="left:1200.46px;top:473.63px;font-size:13.2px;line-height:13.2px;font-weight:normal;color:#3a3a3a;transform:scaleX(1.0400);transform-origin:right 0;-webkit-text-stroke:0.12px currentColor;">0</div>
<div class="t" style="left:1410.41px;top:473.63px;font-size:13.2px;line-height:13.2px;font-weight:normal;color:#e84a3c;transform:scaleX(1.0320);transform-origin:right 0;-webkit-text-stroke:0.12px currentColor;">-0.20</div>
<div class="t" style="left:1487.91px;top:473.63px;font-size:13.2px;line-height:13.2px;font-weight:normal;color:#1a9a96;transform:scaleX(1.0320);transform-origin:right 0;-webkit-text-stroke:0.12px currentColor;">-0.10</div>
<div class="t" style="left:1583.98px;top:473.63px;font-size:13.2px;line-height:13.2px;font-weight:normal;color:#3a3a3a;transform:scaleX(1.0400);transform-origin:right 0;-webkit-text-stroke:0.12px currentColor;">110</div>
<div class="t" style="left:1673.51px;top:473.63px;font-size:13.2px;line-height:13.2px;font-weight:normal;color:#3a3a3a;transform:scaleX(1.0400);transform-origin:right 0;-webkit-text-stroke:0.12px currentColor;">3.19</div>
<div class="t" style="left:87.60px;top:521.83px;font-size:13.2px;line-height:13.2px;font-weight:normal;color:#3a3a3a;transform:scaleX(1.0083);transform-origin:left 0;-webkit-text-stroke:0.12px currentColor;">Bull Put</div>
<div class="t" style="left:308.50px;top:521.83px;font-size:13.2px;line-height:13.2px;font-weight:normal;color:#3a3a3a;transform:scaleX(0.8736);transform-origin:left 0;-webkit-text-stroke:0.12px currentColor;">SPX</div>
<div class="t" style="left:387.50px;top:521.83px;font-size:13.2px;line-height:13.2px;font-weight:normal;color:#3a3a3a;transform:scaleX(1.0328);transform-origin:left 0;-webkit-text-stroke:0.12px currentColor;">2024-03-01</div>
<div class="t" style="left:518.60px;top:521.83px;font-size:13.2px;line-height:13.2px;font-weight:normal;color:#3a3a3a;transform:scaleX(1.0489);transform-origin:left 0;-webkit-text-stroke:0.12px currentColor;">10:15:09</div>
<div class="t" style="left:627.60px;top:521.83px;font-size:13.2px;line-height:13.2px;font-weight:normal;color:#3a3a3a;transform:scaleX(0.9949);transform-origin:left 0;-webkit-text-stroke:0.12px currentColor;">P5080/P5040</div>
<div class="t" style="left:932.71px;top:521.83px;font-size:13.2px;line-height:13.2px;font-weight:normal;color:#3a3a3a;transform:scaleX(1.0320);transform-origin:right 0;-webkit-text-stroke:0.12px currentColor;">-1.65</div>
<div class="t" style="left:1028.46px;top:521.83px;font-size:13.2px;line-height:13.2px;font-weight:normal;color:#3a3a3a;transform:scaleX(1.0400);transform-origin:right 0;-webkit-text-stroke:0.12px currentColor;">1</div>
<div class="t" style="left:1083.41px;top:521.83px;font-size:13.2px;line-height:13.2px;font-weight:normal;color:#3a3a3a;transform:scaleX(1.0320);transform-origin:right 0;-webkit-text-stroke:0.12px currentColor;">-3.30</div>
<div class="t" style="left:1200.46px;top:521.83px;font-size:13.2px;line-height:13.2px;font-weight:normal;color:#3a3a3a;transform:scaleX(1.0400);transform-origin:right 0;-webkit-text-stroke:0.12px currentColor;">0</div>
<div class="t" style="left:1410.41px;top:521.83px;font-size:13.2px;line-height:13.2px;font-weight:normal;color:#e84a3c;transform:scaleX(1.0320);transform-origin:right 0;-webkit-text-stroke:0.12px currentColor;">-0.15</div>
<div class="t" style="left:1487.91px;top:521.83px;font-size:13.2px;line-height:13.2px;font-weight:normal;color:#1a9a96;transform:scaleX(1.0320);transform-origin:right 0;-webkit-text-stroke:0.12px currentColor;">-0.05</div>
<div class="t" style="left:1583.98px;top:521.83px;font-size:13.2px;line-height:13.2px;font-weight:normal;color:#3a3a3a;transform:scaleX(1.0400);transform-origin:right 0;-webkit-text-stroke:0.12px currentColor;">150</div>
<div class="t" style="left:1673.51px;top:521.83px;font-size:13.2px;line-height:13.2px;font-weight:normal;color:#3a3a3a;transform:scaleX(1.0400);transform-origin:right 0;-webkit-text-stroke:0.12px currentColor;">3.19</div>
<div class="t" style="left:87.60px;top:570.03px;font-size:13.2px;line-height:13.2px;font-weight:normal;color:#3a3a3a;transform:scaleX(1.0038);transform-origin:left 0;-webkit-text-stroke:0.12px currentColor;">ICI Vix Contraction AM</div>
<div class="t" style="left:308.50px;top:570.03px;font-size:13.2px;line-height:13.2px;font-weight:normal;color:#3a3a3a;transform:scaleX(0.8736);transform-origin:left 0;-webkit-text-stroke:0.12px currentColor;">SPX</div>
<div class="t" style="left:387.50px;top:570.03px;font-size:13.2px;line-height:13.2px;font-weight:normal;color:#3a3a3a;transform:scaleX(1.0328);transform-origin:left 0;-webkit-text-stroke:0.12px currentColor;">2024-03-01</div>
<div class="t" style="left:518.60px;top:570.03px;font-size:13.2px;line-height:13.2px;font-weight:normal;color:#3a3a3a;transform:scaleX(1.0489);transform-origin:left 0;-webkit-text-stroke:0.12px currentColor;">09:36:53</div>
<div class="t" style="left:627.60px;top:570.03px;font-size:13.2px;line-height:13.2px;font-weight:normal;color:#3a3a3a;-webkit-text-stroke:0.12px currentColor;">C5100/C5120 - P5090/P5055</div>
<div class="t" style="left:929.77px;top:570.03px;font-size:13.2px;line-height:13.2px;font-weight:normal;color:#3a3a3a;transform:scaleX(1.0400);transform-origin:right 0;-webkit-text-stroke:0.12px currentColor;">12.90</div>
<div class="t" style="left:1028.46px;top:570.03px;font-size:13.2px;line-height:13.2px;font-weight:normal;color:#3a3a3a;transform:scaleX(1.0400);transform-origin:right 0;-webkit-text-stroke:0.12px currentColor;">1</div>
<div class="t" style="left:1087.81px;top:570.03px;font-size:13.2px;line-height:13.2px;font-weight:normal;color:#3a3a3a;transform:scaleX(1.0400);transform-origin:right 0;-webkit-text-stroke:0.12px currentColor;">0.39</div>
<div class="t" style="left:1174.77px;top:570.03px;font-size:13.2px;line-height:13.2px;font-weight:normal;color:#3a3a3a;transform:scaleX(1.0400);transform-origin:right 0;-webkit-text-stroke:0.12px currentColor;">19.35</div>
<div class="t" style="left:1256.97px;top:570.03px;font-size:13.2px;line-height:13.2px;font-weight:normal;color:#3a3a3a;transform:scaleX(1.0400);transform-origin:right 0;-webkit-text-stroke:0.12px currentColor;">12.10</div>
<div class="t" style="left:1337.11px;top:570.03px;font-size:13.2px;line-height:13.2px;font-weight:normal;color:#3a3a3a;transform:scaleX(1.0400);transform-origin:right 0;-webkit-text-stroke:0.12px currentColor;">1.00</div>
<div class="t" style="left:1568.57px;top:570.03px;font-size:13.2px;line-height:13.2px;font-weight:normal;color:#3a3a3a;transform:scaleX(1.0335);transform-origin:right 0;-webkit-text-stroke:0.12px currentColor;">-80.00</div>
<div class="t" style="left:1666.17px;top:570.03px;font-size:13.2px;line-height:13.2px;font-weight:normal;color:#3a3a3a;transform:scaleX(1.0400);transform-origin:right 0;-webkit-text-stroke:0.12px currentColor;">13.03</div>
<div style="position:absolute;left:1736.3px;top:165.6px;width:530.2px;height:677.0px;background:#fff;border-radius:3px;box-shadow:0 0 0 1px #e3e2e6,2px 2px 2px rgba(0,0,0,0.03)"></div>
<div style="position:absolute;left:1737.1px;top:166.4px;width:528.6px;height:46.2px;background:#f6f6f6;border-radius:3px 3px 0 0"></div>
<div style="position:absolute;left:1736.3px;top:213px;width:530.2px;height:2px;background:#1c1c1e"></div>
<div style="position:absolute;left:1736.3px;top:262.3px;width:530.2px;height:1px;background:#e3e3e6"></div>
<div style="position:absolute;left:1736.3px;top:310.6px;width:530.2px;height:1px;background:#e3e3e6"></div>
<div style="position:absolute;left:1736.3px;top:358.9px;width:530.2px;height:1px;background:#e3e3e6"></div>
<div style="position:absolute;left:1736.3px;top:407.2px;width:530.2px;height:1px;background:#e3e3e6"></div>
<div style="position:absolute;left:1736.3px;top:455.5px;width:530.2px;height:1px;background:#e3e3e6"></div>
<div style="position:absolute;left:1736.3px;top:503.8px;width:530.2px;height:1px;background:#e3e3e6"></div>
<div style="position:absolute;left:1736.3px;top:552.1px;width:530.2px;height:1px;background:#e3e3e6"></div>
<div style="position:absolute;left:1736.3px;top:600.4px;width:530.2px;height:1px;background:#e3e3e6"></div>
<div style="position:absolute;left:1736.3px;top:648.7px;width:530.2px;height:1px;background:#e3e3e6"></div>
<div style="position:absolute;left:1736.3px;top:697.0px;width:530.2px;height:1px;background:#e3e3e6"></div>
<div style="position:absolute;left:1736.3px;top:745.3px;width:530.2px;height:1px;background:#e3e3e6"></div>
<div style="position:absolute;left:1736.3px;top:793.6px;width:530.2px;height:1px;background:#e3e3e6"></div>
<div class="t" style="left:1750.00px;top:181.60px;font-size:13.0px;line-height:13.0px;font-weight:bold;color:#1c1c1c;transform:scaleX(1.0787);transform-origin:left 0;-webkit-text-stroke:0.2px #1c1c1c;">Pending</div>
<div class="t" style="left:2155.00px;top:181.60px;font-size:13.0px;line-height:13.0px;font-weight:bold;color:#1c1c1c;transform:scaleX(1.0857);transform-origin:left 0;-webkit-text-stroke:0.2px #1c1c1c;">Time</div>
<div class="t" style="left:1749.30px;top:230.83px;font-size:13.2px;line-height:13.2px;font-weight:normal;color:#3a3a3a;transform:scaleX(0.9635);transform-origin:left 0;-webkit-text-stroke:0.12px currentColor;">Bear Call  SPX</div>
<div class="t" style="left:2154.30px;top:230.83px;font-size:13.2px;line-height:13.2px;font-weight:normal;color:#3a3a3a;transform:scaleX(1.0469);transform-origin:left 0;-webkit-text-stroke:0.12px currentColor;">13:45</div>
<div class="t" style="left:1749.30px;top:279.02px;font-size:13.2px;line-height:13.2px;font-weight:normal;color:#3a3a3a;transform:scaleX(0.9696);transform-origin:left 0;-webkit-text-stroke:0.12px currentColor;">Bull Put   SPX</div>
<div class="t" style="left:2154.30px;top:279.02px;font-size:13.2px;line-height:13.2px;font-weight:normal;color:#3a3a3a;transform:scaleX(1.0469);transform-origin:left 0;-webkit-text-stroke:0.12px currentColor;">13:45</div>
<div class="t" style="left:1749.30px;top:327.21px;font-size:13.2px;line-height:13.2px;font-weight:normal;color:#3a3a3a;transform:scaleX(0.9776);transform-origin:left 0;-webkit-text-stroke:0.12px currentColor;">Bear Call  Late SPX</div>
<div class="t" style="left:2154.30px;top:327.21px;font-size:13.2px;line-height:13.2px;font-weight:normal;color:#3a3a3a;transform:scaleX(1.0469);transform-origin:left 0;-webkit-text-stroke:0.12px currentColor;">14:15</div>
<div class="t" style="left:1749.30px;top:375.40px;font-size:13.2px;line-height:13.2px;font-weight:normal;color:#3a3a3a;transform:scaleX(0.9827);transform-origin:left 0;-webkit-text-stroke:0.12px currentColor;">Bull Put   Late SPX</div>
<div class="t" style="left:2154.30px;top:375.40px;font-size:13.2px;line-height:13.2px;font-weight:normal;color:#3a3a3a;transform:scaleX(1.0469);transform-origin:left 0;-webkit-text-stroke:0.12px currentColor;">14:15</div>
<div class="t" style="left:1749.30px;top:423.59px;font-size:13.2px;line-height:13.2px;font-weight:normal;color:#3a3a3a;transform:scaleX(0.9735);transform-origin:left 0;-webkit-text-stroke:0.12px currentColor;">Bear Cal  Late SPX</div>
<div class="t" style="left:2154.30px;top:423.59px;font-size:13.2px;line-height:13.2px;font-weight:normal;color:#3a3a3a;transform:scaleX(1.0469);transform-origin:left 0;-webkit-text-stroke:0.12px currentColor;">14:45</div>
<div class="t" style="left:1749.30px;top:471.78px;font-size:13.2px;line-height:13.2px;font-weight:normal;color:#3a3a3a;transform:scaleX(0.9827);transform-origin:left 0;-webkit-text-stroke:0.12px currentColor;">Bull Put   Late SPX</div>
<div class="t" style="left:2154.30px;top:471.78px;font-size:13.2px;line-height:13.2px;font-weight:normal;color:#3a3a3a;transform:scaleX(1.0469);transform-origin:left 0;-webkit-text-stroke:0.12px currentColor;">14:45</div>
<div class="t" style="left:1749.30px;top:519.97px;font-size:13.2px;line-height:13.2px;font-weight:normal;color:#3a3a3a;transform:scaleX(0.9893);transform-origin:left 0;-webkit-text-stroke:0.12px currentColor;">Power Hour Normal Day SPX</div>
<div class="t" style="left:2154.30px;top:519.97px;font-size:13.2px;line-height:13.2px;font-weight:normal;color:#3a3a3a;transform:scaleX(1.0469);transform-origin:left 0;-webkit-text-stroke:0.12px currentColor;">14:57</div>
<div class="t" style="left:1749.30px;top:568.16px;font-size:13.2px;line-height:13.2px;font-weight:normal;color:#3a3a3a;transform:scaleX(0.9575);transform-origin:left 0;-webkit-text-stroke:0.12px currentColor;">DC Vi 5-7  SPX</div>
<div class="t" style="left:2154.30px;top:568.16px;font-size:13.2px;line-height:13.2px;font-weight:normal;color:#3a3a3a;transform:scaleX(1.0469);transform-origin:left 0;-webkit-text-stroke:0.12px currentColor;">15:15</div>
<div class="t" style="left:1749.30px;top:616.35px;font-size:13.2px;line-height:13.2px;font-weight:normal;color:#3a3a3a;transform:scaleX(0.9575);transform-origin:left 0;-webkit-text-stroke:0.12px currentColor;">DC Vi 4-7  SPX</div>
<div class="t" style="left:2154.30px;top:616.35px;font-size:13.2px;line-height:13.2px;font-weight:normal;color:#3a3a3a;transform:scaleX(1.0469);transform-origin:left 0;-webkit-text-stroke:0.12px currentColor;">15:15</div>
<div class="t" style="left:1749.30px;top:664.54px;font-size:13.2px;line-height:13.2px;font-weight:normal;color:#3a3a3a;transform:scaleX(0.9575);transform-origin:left 0;-webkit-text-stroke:0.12px currentColor;">DC Vi 6-7  SPX</div>
<div class="t" style="left:2154.30px;top:664.54px;font-size:13.2px;line-height:13.2px;font-weight:normal;color:#3a3a3a;transform:scaleX(1.0469);transform-origin:left 0;-webkit-text-stroke:0.12px currentColor;">15:15</div>
<div class="t" style="left:1749.30px;top:712.73px;font-size:13.2px;line-height:13.2px;font-weight:normal;color:#3a3a3a;transform:scaleX(0.9575);transform-origin:left 0;-webkit-text-stroke:0.12px currentColor;">DC Vi 3-6  SPX</div>
<div class="t" style="left:2154.30px;top:712.73px;font-size:13.2px;line-height:13.2px;font-weight:normal;color:#3a3a3a;transform:scaleX(1.0469);transform-origin:left 0;-webkit-text-stroke:0.12px currentColor;">15:30</div>
<div class="t" style="left:1749.30px;top:760.92px;font-size:13.2px;line-height:13.2px;font-weight:normal;color:#3a3a3a;transform:scaleX(0.9575);transform-origin:left 0;-webkit-text-stroke:0.12px currentColor;">DC Vi 3-5  SPX</div>
<div class="t" style="left:2154.30px;top:760.92px;font-size:13.2px;line-height:13.2px;font-weight:normal;color:#3a3a3a;transform:scaleX(1.0469);transform-origin:left 0;-webkit-text-stroke:0.12px currentColor;">15:50</div>
<div class="t" style="left:1749.30px;top:809.11px;font-size:13.2px;line-height:13.2px;font-weight:normal;color:#3a3a3a;transform:scaleX(0.9575);transform-origin:left 0;-webkit-text-stroke:0.12px currentColor;">DC Vi 3-7  SPX</div>
<div class="t" style="left:2154.30px;top:809.11px;font-size:13.2px;line-height:13.2px;font-weight:normal;color:#3a3a3a;transform:scaleX(1.0469);transform-origin:left 0;-webkit-text-stroke:0.12px currentColor;">15:55</div>
<div style="position:absolute;left:2206px;top:888.5px;width:58px;height:58px;background:#1b73be;border-radius:50%;box-shadow:0 3px 5px -1px rgba(0,0,0,0.12),0 6px 10px 0 rgba(0,0,0,0.08),0 1px 18px 0 rgba(20,40,80,0.08)"></div>
<div style="position:absolute;left:2227.2px;top:917.3px;width:15.8px;height:1.6px;background:#fff"></div>
<div style="position:absolute;left:2234.3px;top:910.3px;width:1.6px;height:15.6px;background:#fff"></div>
</body></html>
